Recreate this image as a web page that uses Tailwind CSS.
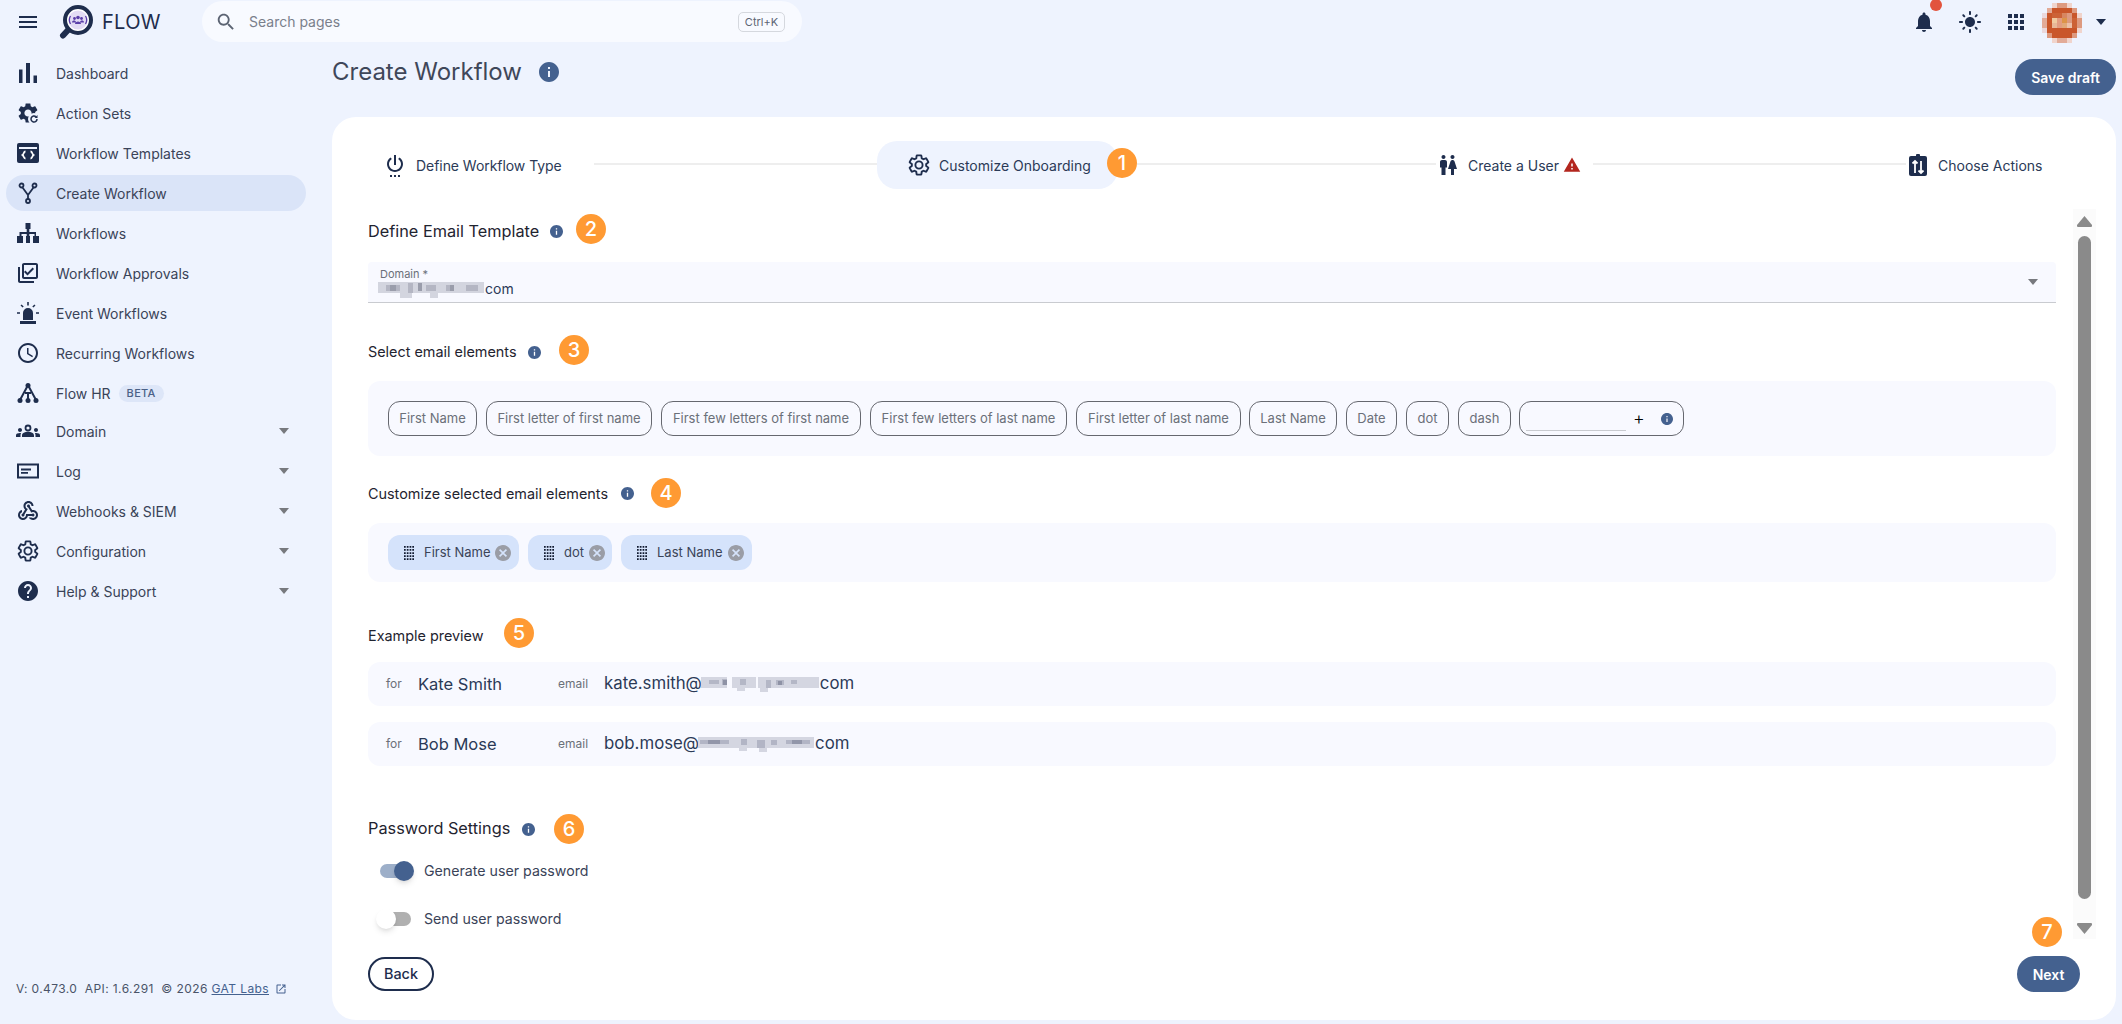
<!DOCTYPE html>
<html lang="en">

<head>
    <meta charset="UTF-8">
    <title>Create Workflow</title>
    <script src="https://cdn.jsdelivr.net/npm/@tailwindcss/browser@4"></script>
</head>

<body class="h-[1024px] w-[2122px] overflow-hidden bg-[#eef3fe] font-[family-name:Inter,sans-serif] text-[#1e2d4d]">

    <!-- top bar -->
    <header class="flex h-[44px] items-center">
        <svg class="ml-[16px] h-[24px] w-[24px] fill-[#1e2d4d]" viewBox="0 0 24 24"><path d="M3 18h18v-2H3v2zm0-5h18v-2H3v2zm0-7v2h18V6H3z"/></svg>
        <svg class="ml-[18px] h-[34px] w-[36px]" viewBox="0 0 36 34">
            <path d="M11 24 5 30.500" stroke="#1e2d4d" stroke-width="6" stroke-linecap="round"/>
            <circle cx="20" cy="15" r="13" fill="#fff" stroke="#1e2d4d" stroke-width="4"/>
            <circle cx="20" cy="15" r="9.500" fill="#e3dcf4"/>
            <circle cx="20" cy="12.500" r="1.800" fill="#5b3fa8"/><circle cx="16.500" cy="13.500" r="1.400" fill="#5b3fa8"/><circle cx="23.500" cy="13.500" r="1.400" fill="#5b3fa8"/>
            <path d="M17 19c0-3.500 6-3.500 6 0zM14 17.500c0-2.600 4-2.600 4 0zM22 17.500c0-2.600 4-2.600 4 0z" fill="#5b3fa8"/>
            <path d="M12.500 11c-1.500 2.500-1.500 5.500 0 8M27.500 11c1.500 2.500 1.500 5.500 0 8" fill="none" stroke="#5b3fa8" stroke-width="1.300"/>
        </svg>
        <span class="ml-[8px] w-[100px] text-[20px] leading-none tracking-[0.3px] text-[#1e2d4d]">FLOW</span>
        <div class="-mt-[1px] flex h-[41px] w-[600px] items-center rounded-full bg-[#f8faff] pl-[13px]">
            <svg class="h-[22px] w-[22px] fill-[#5c6473]" viewBox="0 0 24 24"><path d="M15.500 14h-.79l-.28-.27C15.410 12.590 16 11.110 16 9.500 16 5.910 13.090 3 9.500 3S3 5.910 3 9.500 5.910 16 9.500 16c1.610 0 3.090-.59 4.230-1.570l.27.28v.79l5 4.990L20.490 19l-4.990-5zm-6 0C7.010 14 5 11.990 5 9.500S7.010 5 9.500 5 14 7.010 14 9.500 11.990 14 9.500 14z"/></svg>
            <span class="ml-[12px] text-[14px] text-[#7a808c]">Search pages</span>
            <span class="ml-auto mr-[17px] w-[47px] rounded-[5px] border border-[#d5d8de] py-[2px] text-center text-[11px] leading-[14px] text-[#5c6473]">Ctrl+K</span>
        </div>
        <div class="ml-auto flex items-center">
            <div class="relative h-[24px] w-[24px]">
                <svg class="h-[24px] w-[24px] fill-[#1e2d4d]" viewBox="0 0 24 24"><path d="M12 22c1.100 0 2-.9 2-2h-4c0 1.100.89 2 2 2zm6-6v-5c0-3.070-1.640-5.640-4.500-6.320V4c0-.83-.67-1.500-1.500-1.500s-1.500.67-1.500 1.500v.68C7.630 5.360 6 7.920 6 11v5l-2 2v1h16v-1l-2-2z"/></svg>
                <span class="absolute -top-[11px] left-[18px] h-[12px] w-[12px] rounded-full bg-[#e2533d]"></span>
            </div>
            <svg class="ml-[22px] h-[24px] w-[24px] fill-[#1e2d4d]" viewBox="0 0 24 24"><path d="M12 7c-2.760 0-5 2.240-5 5s2.240 5 5 5 5-2.240 5-5-2.240-5-5-5zM2 13h2c.55 0 1-.45 1-1s-.45-1-1-1H2c-.55 0-1 .45-1 1s.45 1 1 1zm18 0h2c.55 0 1-.45 1-1s-.45-1-1-1h-2c-.55 0-1 .45-1 1s.45 1 1 1zM11 2v2c0 .55.45 1 1 1s1-.45 1-1V2c0-.55-.45-1-1-1s-1 .45-1 1zm0 18v2c0 .55.45 1 1 1s1-.45 1-1v-2c0-.55-.45-1-1-1s-1 .45-1 1zM5.990 4.580c-.39-.39-1.030-.39-1.410 0-.39.39-.39 1.030 0 1.410l1.060 1.060c.39.39 1.030.39 1.410 0s.39-1.030 0-1.410L5.990 4.580zm12.370 12.370c-.39-.39-1.030-.39-1.410 0-.39.39-.39 1.030 0 1.410l1.060 1.060c.39.39 1.030.39 1.410 0 .39-.39.39-1.030 0-1.410l-1.060-1.060zm1.060-10.960c.39-.39.39-1.030 0-1.410-.39-.39-1.030-.39-1.410 0l-1.060 1.060c-.39.39-.39 1.030 0 1.410s1.030.39 1.410 0l1.060-1.060zM7.050 18.360c.39-.39.39-1.030 0-1.410-.39-.39-1.030-.39-1.410 0l-1.060 1.060c-.39.39-.39 1.030 0 1.410s1.030.39 1.410 0l1.060-1.060z"/></svg>
            <svg class="ml-[22px] h-[24px] w-[24px] fill-[#1e2d4d]" viewBox="0 0 24 24"><path d="M4 8h4V4H4v4zm6 12h4v-4h-4v4zm-6 0h4v-4H4v4zm0-6h4v-4H4v4zm6 0h4v-4h-4v4zm6-10v4h4V4h-4zm-6 4h4V4h-4v4zm6 6h4v-4h-4v4zm0 6h4v-4h-4v4z"/></svg>
            <svg class="ml-[14px] mt-[2px] h-[40px] w-[40px]" viewBox="0 0 8 8" shape-rendering="crispEdges">
                <path fill="#f0d4cc" d="M2 0h1v1H2zM5 0h1v1H5zM7 2h1v1H7zM7 5h1v1H7zM2 7h1v1H2zM5 7h1v1H5z"/>
                <path fill="#dd9a80" d="M3 0h2v1H3zM6 1h1v1H6zM5 2h1v1H5zM7 3h1v2H7zM5 3h1v1H5zM1 6h1v1H1zM6 6h1v1H6z"/>
                <path fill="#ead8dc" d="M0 2h1v1H0zM0 5h1v1H0z"/>
                <path fill="#e2ab98" d="M0 3h1v2H0zM1 1h1v1H1zM3 7h2v1H3z"/>
                <path fill="#c9562a" d="M2 1h4v1H2zM1 2h1v4H1zM6 2h1v1H6zM2 5h5v1H2zM2 6h4v1H2z"/>
                <path fill="#cc6236" d="M2 2h2v1H2zM6 3h1v2H6z"/>
                <path fill="#d78660" d="M4 2h1v1H4z"/>
                <path fill="#f0cba0" d="M2 3h1v1H2z"/>
                <path fill="#e29c80" d="M3 3h1v2H3z"/>
                <path fill="#dd9448" d="M4 3h1v1H4z"/>
                <path fill="#e8b898" d="M2 4h1v1H2z"/>
                <path fill="#e2a878" d="M4 4h1v1H4z"/>
                <path fill="#ecc0a8" d="M5 4h1v1H5z"/>
            </svg>
            <svg class="ml-[14px] mr-[16px] h-[8px] w-[10px] fill-[#1e2d4d]" viewBox="0 0 10 8"><path d="M0 1h10L5 7z"/></svg>
        </div>
    </header>

    <div class="flex h-[980px]">

        <!-- sidebar -->
        <aside class="flex w-[332px] shrink-0 flex-col pl-[6px] pt-[11px]">
            <nav class="flex w-[300px] flex-col gap-[4px] text-[14px] text-[#3a4358]">
                <a class="flex h-[36px] items-center gap-[16px] pl-[10px]">
                    <svg class="h-[24px] w-[24px] fill-[#1e2d4d]" viewBox="0 0 24 24"><path d="M3 8.500h3.500V22H3zM10 2h4v20h-4zM17.500 14.500H21V22h-3.500z"/></svg>
                    Dashboard
                </a>
                <a class="flex h-[36px] items-center gap-[16px] pl-[10px]">
                    <svg class="h-[24px] w-[24px]" viewBox="0 0 24 24"><path fill="#1e2d4d" d="M19.140 12.940c.04-.3.06-.61.06-.94 0-.32-.02-.64-.07-.94l2.030-1.580c.18-.14.23-.41.12-.61l-1.920-3.320c-.12-.22-.37-.29-.59-.22l-2.390.96c-.5-.38-1.030-.7-1.620-.94l-.36-2.540c-.04-.24-.24-.41-.48-.41h-3.840c-.24 0-.43.17-.47.41l-.36 2.540c-.59.24-1.130.57-1.620.94l-2.390-.96c-.22-.08-.47 0-.59.22L2.740 8.870c-.12.21-.08.47.12.61l2.030 1.580c-.05.3-.09.63-.09.94s.02.64.07.94l-2.030 1.580c-.18.14-.23.41-.12.61l1.920 3.320c.12.22.37.29.59.22l2.390-.96c.5.38 1.030.7 1.620.94l.36 2.540c.05.24.24.41.48.41h3.840c.24 0 .44-.17.47-.41l.36-2.540c.59-.24 1.130-.56 1.620-.94l2.390.96c.22.08.47 0 .59-.22l1.920-3.320c.12-.22.07-.47-.12-.61l-2.010-1.580zM12 15.600c-1.980 0-3.600-1.620-3.600-3.600s1.620-3.600 3.600-3.600 3.600 1.620 3.600 3.600-1.620 3.600-3.600 3.600z"/><circle cx="18" cy="18" r="6" fill="#eef3fe"/><path d="M21 18a3 3 0 1 1-1-2.200" fill="none" stroke="#1e2d4d" stroke-width="1.500"/><path d="M21.500 14v3h-3z" fill="#1e2d4d"/></svg>
                    Action Sets
                </a>
                <a class="flex h-[36px] items-center gap-[16px] pl-[10px]">
                    <svg class="h-[24px] w-[24px]" viewBox="0 0 24 24"><rect x="1" y="2" width="22" height="20" rx="2" fill="#1e2d4d"/><rect x="3" y="6" width="18" height="2" fill="#eef3fe"/><path d="M9.500 10.500c-2 0-1.500 2.500-3 3.500 1.500 1 1 3.500 3 3.500M14.500 10.500c2 0 1.500 2.500 3 3.500-1.500 1-1 3.500-3 3.500" fill="none" stroke="#fff" stroke-width="1.800"/></svg>
                    Workflow Templates
                </a>
                <a class="flex h-[36px] items-center gap-[16px] rounded-full bg-[#dae4f8] pl-[10px]">
                    <svg class="h-[24px] w-[24px]" viewBox="0 0 24 24" fill="none" stroke="#1e2d4d" stroke-width="1.800"><circle cx="5.500" cy="4.500" r="2"/><circle cx="18.500" cy="4.500" r="2"/><circle cx="12" cy="20" r="2"/><path d="M6.500 6.500 12 14l5.500-7.500M12 14v4"/></svg>
                    Create Workflow
                </a>
                <a class="flex h-[36px] items-center gap-[16px] pl-[10px]">
                    <svg class="h-[24px] w-[24px] fill-[#1e2d4d]" viewBox="0 0 24 24"><path d="M9.500 2h5v6h-1.200v3H20v4h1.500 1.500v7h-6v-7h1.500v-2h-5.200v2H14v7h-4v-7h.7v-2H5.500v2H7v7H1v-7h2.500v-4h7.200V8H9.500z"/></svg>
                    Workflows
                </a>
                <a class="flex h-[36px] items-center gap-[16px] pl-[10px]">
                    <svg class="h-[24px] w-[24px] fill-[#1e2d4d]" viewBox="0 0 24 24"><path d="M20 4v12H8V4h12m0-2H8c-1.100 0-2 .9-2 2v12c0 1.100.9 2 2 2h12c1.100 0 2-.9 2-2V4c0-1.100-.9-2-2-2zm-8.500 12.500L8 11l1.410-1.410 2.090 2.080 5.090-5.090L18 8l-6.500 6.500zM4 6H2v14c0 1.100.9 2 2 2h14v-2H4V6z"/></svg>
                    Workflow Approvals
                </a>
                <a class="flex h-[36px] items-center gap-[16px] pl-[10px]">
                    <svg class="h-[24px] w-[24px] fill-[#1e2d4d]" viewBox="0 0 24 24"><path d="M7 19v-7a5 5 0 0 1 10 0v7zM4 20h16v3H4zM11.200 1h1.600v3.500h-1.600zM1 11.200h3v1.600H1zM20 11.200h3v1.600h-3zM4.500 4.500l1.100-1.100 2.100 2.100-1.100 1.100zM18.400 3.400l1.100 1.100-2.100 2.100-1.100-1.100z"/></svg>
                    Event Workflows
                </a>
                <a class="flex h-[36px] items-center gap-[16px] pl-[10px]">
                    <svg class="h-[24px] w-[24px] fill-[#1e2d4d]" viewBox="0 0 24 24"><path d="M11.990 2C6.470 2 2 6.480 2 12s4.470 10 9.990 10C17.520 22 22 17.520 22 12S17.520 2 11.990 2zM12 20c-4.420 0-8-3.580-8-8s3.580-8 8-8 8 3.580 8 8-3.580 8-8 8zm.5-13H11v6l5.250 3.150.75-1.230-4.500-2.670z"/></svg>
                    Recurring Workflows
                </a>
                <a class="flex h-[36px] items-center gap-[16px] pl-[10px]">
                    <svg class="h-[24px] w-[24px]" viewBox="0 0 24 24"><g fill="#1e2d4d"><circle cx="12" cy="4.500" r="2.500"/><circle cx="4" cy="19.500" r="2.500"/><circle cx="12" cy="19.500" r="2.500"/><circle cx="20" cy="19.500" r="2.500"/></g><path d="M11 6 4 19M13 6l7 13M12 12l-.01 7M9 12l3 0 3 0" fill="none" stroke="#1e2d4d" stroke-width="2"/></svg>
                    <span>Flow HR</span>
                    <span class="-ml-[8px] rounded-full bg-[#dde6f8] px-[8px] text-[11px] font-medium leading-[17px] tracking-[0.3px] text-[#4a6187]">BETA</span>
                </a>
                <a class="-mt-[2px] flex h-[36px] items-center gap-[16px] pl-[10px]">
                    <svg class="h-[24px] w-[24px]" viewBox="0 0 24 24"><circle cx="12" cy="9" r="2.500" fill="none" stroke="#1e2d4d" stroke-width="1.800"/><path fill="#1e2d4d" d="M4 13c1.100 0 2-.9 2-2s-.9-2-2-2-2 .9-2 2 .9 2 2 2zm1.130 1.100c-.37-.06-.74-.1-1.130-.1-.99 0-1.930.21-2.780.58C.48 14.900 0 15.620 0 16.430V18h4.500v-1.610c0-.83.23-1.610.63-2.290zM20 13c1.100 0 2-.9 2-2s-.9-2-2-2-2 .9-2 2 .9 2 2 2zm4 3.430c0-.81-.48-1.530-1.220-1.850-.85-.37-1.790-.58-2.780-.58-.39 0-.76.04-1.130.1.4.68.63 1.460.63 2.290V18H24v-1.570zM12 12.750c1.630 0 3.070.39 4.240.9 1.080.48 1.760 1.560 1.760 2.730V18H6v-1.610c0-1.180.68-2.260 1.760-2.730 1.170-.52 2.610-.91 4.240-.91z"/></svg>
                    Domain
                    <svg class="ml-auto mr-[17px] h-[6px] w-[10px] fill-[#77797e]" viewBox="0 0 10 6"><path d="M0 0h10L5 6z"/></svg>
                </a>
                <a class="flex h-[36px] items-center gap-[16px] pl-[10px]">
                    <svg class="h-[24px] w-[24px]" viewBox="0 0 24 24"><rect x="2" y="5.500" width="20" height="13" fill="none" stroke="#1e2d4d" stroke-width="2"/><path d="M5 9.500h10v2H5zM5 13h7v1.800H5z" fill="#1e2d4d"/></svg>
                    Log
                    <svg class="ml-auto mr-[17px] h-[6px] w-[10px] fill-[#77797e]" viewBox="0 0 10 6"><path d="M0 0h10L5 6z"/></svg>
                </a>
                <a class="flex h-[36px] items-center gap-[16px] pl-[10px]">
                    <svg class="h-[24px] w-[24px] fill-[#1e2d4d]" viewBox="0 0 24 24"><path d="M10 15h5.880c.27-.31.67-.5 1.120-.5.83 0 1.500.67 1.500 1.500s-.67 1.500-1.500 1.500c-.44 0-.84-.19-1.120-.5H11.900c-.46 2.280-2.480 4-4.900 4-2.760 0-5-2.240-5-5 0-2.420 1.720-4.440 4-4.900v2.070c-1.160.41-2 1.530-2 2.830 0 1.650 1.350 3 3 3s3-1.350 3-3v-1zm2.500-11c1.650 0 3 1.350 3 3h2c0-2.760-2.240-5-5-5s-5 2.240-5 5c0 1.430.6 2.710 1.550 3.620l-2.350 3.900c-.68.14-1.200.75-1.200 1.480 0 .83.67 1.500 1.500 1.500s1.500-.67 1.500-1.500c0-.16-.02-.31-.07-.45l3.380-5.630C10.490 9.610 9.500 8.420 9.500 7c0-1.650 1.350-3 3-3zm4.500 9c-.64 0-1.230.2-1.720.54l-3.050-5.070C11.530 8.350 11 7.740 11 7c0-.83.67-1.500 1.500-1.500S14 6.170 14 7c0 .15-.02.29-.06.43l2.190 3.650c.28-.05.57-.08.87-.08 2.760 0 5 2.240 5 5s-2.240 5-5 5c-1.850 0-3.470-1.010-4.330-2.500h2.670c.48.32 1.050.5 1.660.5 1.650 0 3-1.350 3-3s-1.350-3-3-3z"/></svg>
                    Webhooks &amp; SIEM
                    <svg class="ml-auto mr-[17px] h-[6px] w-[10px] fill-[#77797e]" viewBox="0 0 10 6"><path d="M0 0h10L5 6z"/></svg>
                </a>
                <a class="flex h-[36px] items-center gap-[16px] pl-[10px]">
                    <svg class="h-[24px] w-[24px]" viewBox="0 0 24 24"><path fill="none" stroke="#1e2d4d" stroke-width="1.900" d="M19.140 12.940c.04-.3.06-.61.06-.94 0-.32-.02-.64-.07-.94l2.030-1.580c.18-.14.23-.41.12-.61l-1.920-3.320c-.12-.22-.37-.29-.59-.22l-2.390.96c-.5-.38-1.030-.7-1.620-.94l-.36-2.540c-.04-.24-.24-.41-.48-.41h-3.840c-.24 0-.43.17-.47.41l-.36 2.540c-.59.24-1.130.57-1.620.94l-2.390-.96c-.22-.08-.47 0-.59.22L2.740 8.870c-.12.21-.08.47.12.61l2.030 1.580c-.05.3-.09.63-.09.94s.02.64.07.94l-2.030 1.580c-.18.14-.23.41-.12.61l1.920 3.320c.12.22.37.29.59.22l2.390-.96c.5.38 1.030.7 1.620.94l.36 2.540c.05.24.24.41.48.41h3.840c.24 0 .44-.17.47-.41l.36-2.540c.59-.24 1.130-.56 1.620-.94l2.390.96c.22.08.47 0 .59-.22l1.920-3.320c.12-.22.07-.47-.12-.61l-2.010-1.580zM12 15.600c-1.980 0-3.600-1.620-3.600-3.600s1.620-3.600 3.600-3.600 3.600 1.620 3.600 3.600-1.620 3.600-3.600 3.600z"/></svg>
                    Configuration
                    <svg class="ml-auto mr-[17px] h-[6px] w-[10px] fill-[#77797e]" viewBox="0 0 10 6"><path d="M0 0h10L5 6z"/></svg>
                </a>
                <a class="flex h-[36px] items-center gap-[16px] pl-[10px]">
                    <svg class="h-[24px] w-[24px] fill-[#1e2d4d]" viewBox="0 0 24 24"><path d="M12 2C6.480 2 2 6.480 2 12s4.480 10 10 10 10-4.480 10-10S17.520 2 12 2zm1 17h-2v-2h2v2zm2.070-7.750l-.9.92C13.450 12.900 13 13.500 13 15h-2v-.5c0-1.100.45-2.100 1.170-2.830l1.240-1.260c.37-.36.59-.86.59-1.410 0-1.100-.9-2-2-2s-2 .9-2 2H8c0-2.210 1.790-4 4-4s4 1.790 4 4c0 .88-.36 1.680-.93 2.250z"/></svg>
                    Help &amp; Support
                    <svg class="ml-auto mr-[17px] h-[6px] w-[10px] fill-[#77797e]" viewBox="0 0 10 6"><path d="M0 0h10L5 6z"/></svg>
                </a>
            </nav>
            <div class="mb-[27px] mt-auto flex items-center pl-[10px] text-[12px] leading-[16px] tracking-[0.4px] text-[#4a5368]">
                <span class="whitespace-pre">V: 0.473.0  API: 1.6.291  © 2026 </span><a class="text-[#44618f] underline">GAT Labs</a>
                <svg class="ml-[6px] h-[12px] w-[12px] fill-[#44618f]" viewBox="0 0 24 24"><path d="M19 19H5V5h7V3H5c-1.110 0-2 .9-2 2v14c0 1.100.89 2 2 2h14c1.100 0 2-.9 2-2v-7h-2v7zM14 3v2h3.590l-9.830 9.830 1.410 1.410L19 6.410V10h2V3h-7z"/></svg>
            </div>
        </aside>

        <main class="flex w-[1784px] flex-col">
            <div class="flex h-[73px] items-start">
                <h1 class="mt-[12px] text-[24px] font-normal leading-[32px] text-[#3f4759]">Create Workflow</h1>
                <svg class="ml-[17px] mt-[18px] h-[20px] w-[20px] fill-[#44618f]" viewBox="2 2 20 20"><path d="M12 2C6.480 2 2 6.480 2 12s4.480 10 10 10 10-4.480 10-10S17.520 2 12 2zm1 15h-2v-6h2v6zm0-8h-2V7h2v2z"/></svg>
                <button class="ml-auto mt-[15px] h-[36px] w-[101px] rounded-full bg-[#44618f] text-[14px] font-semibold text-white">Save draft</button>
            </div>

            <section class="flex h-[903px] flex-col rounded-[24px] bg-white pl-[36px] pr-[20px]">

                <!-- stepper -->
                <div class="mt-[24px] flex h-[48px] items-center text-[14px] text-[#2b3a57]">
                    <svg class="ml-[15px] h-[24px] w-[24px] fill-[#1e2d4d]" viewBox="0 0 24 24"><path d="M7 24h2v-2H7v2zm4 0h2v-2h-2v2zm2-22h-2v10h2V2zm3.560 2.440l-1.450 1.450C16.840 6.940 18 8.830 18 11c0 3.310-2.690 6-6 6s-6-2.690-6-6c0-2.170 1.160-4.060 2.880-5.120L7.440 4.440C5.360 5.880 4 8.280 4 11c0 4.420 3.580 8 8 8s8-3.580 8-8c0-2.720-1.360-5.120-3.440-6.560zM15 24h2v-2h-2v2z"/></svg>
                    <span class="ml-[9px] w-[145px] whitespace-nowrap tracking-[-0.05px]">Define Workflow Type</span>
                    <span class="-mt-[2px] ml-[33px] h-[2px] w-[283px] bg-[#eeeeee]"></span>
                    <div class="relative flex h-[48px] w-[241px] items-center rounded-[20px] bg-[#eef3fe] pl-[30px]">
                        <svg class="h-[24px] w-[24px]" viewBox="0 0 24 24"><path fill="none" stroke="#1e2d4d" stroke-width="1.900" d="M19.140 12.940c.04-.3.06-.61.06-.94 0-.32-.02-.64-.07-.94l2.030-1.580c.18-.14.23-.41.12-.61l-1.920-3.320c-.12-.22-.37-.29-.59-.22l-2.390.96c-.5-.38-1.030-.7-1.620-.94l-.36-2.540c-.04-.24-.24-.41-.48-.41h-3.840c-.24 0-.43.17-.47.41l-.36 2.540c-.59.24-1.130.57-1.620.94l-2.390-.96c-.22-.08-.47 0-.59.22L2.740 8.870c-.12.21-.08.47.12.61l2.030 1.580c-.05.3-.09.63-.09.94s.02.64.07.94l-2.030 1.580c-.18.14-.23.41-.12.61l1.920 3.320c.12.22.37.29.59.22l2.390-.96c.5.38 1.030.7 1.620.94l.36 2.540c.05.24.24.41.48.41h3.840c.24 0 .44-.17.47-.41l.36-2.540c.59-.24 1.130-.56 1.620-.94l2.390.96c.22.08.47 0 .59-.22l1.920-3.320c.12-.22.07-.47-.12-.61l-2.010-1.580zM12 15.600c-1.980 0-3.600-1.620-3.600-3.600s1.620-3.600 3.600-3.600 3.600 1.620 3.600 3.600-1.620 3.600-3.600 3.600z"/></svg>
                        <span class="ml-[8px] whitespace-nowrap">Customize Onboarding</span>
                        <span class="absolute left-[230px] top-[7px] flex h-[30px] w-[30px] items-center justify-center rounded-full bg-[#ff9a33] text-[20px] font-medium text-white">1</span>
                    </div>
                    <span class="-mt-[2px] ml-[19px] h-[2px] w-[299px] bg-[#eeeeee]"></span>
                    <svg class="h-[24px] w-[24px] fill-[#1e2d4d]" viewBox="0 0 24 24"><path d="M5.500 22v-7.500H4V9c0-1.100.9-2 2-2h3c1.100 0 2 .9 2 2v5.500H9.500V22h-4zM18 22v-6h3l-2.540-7.630C18.180 7.550 17.420 7 16.560 7h-.12c-.86 0-1.630.55-1.900 1.370L12 16h3v6h3zM7.500 6c1.110 0 2-.89 2-2s-.89-2-2-2-2 .89-2 2 .89 2 2 2zm9 0c1.110 0 2-.89 2-2s-.89-2-2-2-2 .89-2 2 .89 2 2 2z"/></svg>
                    <span class="ml-[8px] w-[92px] whitespace-nowrap">Create a User</span>
                    <svg class="ml-[3px] h-[18px] w-[18px] fill-[#b3261e]" viewBox="0 0 24 24"><path d="M1 21h22L12 2 1 21zm12-3h-2v-2h2v2zm0-4h-2v-4h2v4z"/></svg>
                    <span class="-mt-[2px] ml-[12px] h-[2px] w-[313px] bg-[#eeeeee]"></span>
                    <svg class="h-[24px] w-[24px]" viewBox="0 0 24 24"><rect x="3" y="3" width="18" height="20" rx="2" fill="#1e2d4d"/><rect x="10" y="1" width="4" height="4" rx="1" fill="#1e2d4d"/><path d="M9 20V8M6.500 10.500 9 8l2.500 2.500M15 8v12M12.500 17.500 15 20l2.500-2.500" fill="none" stroke="#fff" stroke-width="1.800"/></svg>
                    <span class="ml-[8px] whitespace-nowrap">Choose Actions</span>
                </div>

                <div class="mt-[20px] flex h-[730px] overflow-hidden">
                    <!-- form -->
                    <div class="w-[1688px] shrink-0">
                        <div class="mt-[5px] flex h-[30px] items-center">
                            <h2 class="w-[171px] whitespace-nowrap pt-[4px] text-[16.300px] leading-[24px] text-[#1f2430]">Define Email Template</h2>
                            <svg class="ml-[11px] mt-[4px] h-[13px] w-[13px] fill-[#44618f]" viewBox="2 2 20 20"><path d="M12 2C6.480 2 2 6.480 2 12s4.480 10 10 10 10-4.480 10-10S17.520 2 12 2zm1 15h-2v-6h2v6zm0-8h-2V7h2v2z"/></svg>
                            <span class="ml-[13px] flex h-[30px] w-[30px] items-center justify-center rounded-full bg-[#ff9a33] text-[20px] font-medium text-white">2</span>
                        </div>
                        <div class="mt-[18px] flex h-[41px] items-center rounded-t-[4px] border-b border-[#c9cbd0] bg-[#f8f9ff] pl-[12px] pr-[18px]">
                            <div class="flex-1">
                                <div class="text-[11px] leading-[14px] text-[#6b7079]">Domain *</div>
                                <div class="-ml-[2px] -mt-[1px] flex h-[18px] items-center text-[14px] text-[#2b3a57]">
                                    <svg class="h-[18px] w-[106px] blur-[0.7px]" viewBox="0 0 106 18" shape-rendering="crispEdges">
                                        <path fill="#d3d5df" d="M0 2h106v11H0zM22 13h12v5H22zM52 13h8v5h-8z"/>
                                        <path fill="#b4b6c3" d="M8 5h14v6H8zM30 3h5v10h-5zM48 5h10v6H48zM68 5h8v6h-8zM88 5h12v6H88z"/>
                                        <path fill="#9a9dab" d="M12 5h6v6h-6zM72 5h4v6h-4zM40 3h4v8h-4z"/>
                                    </svg>
                                    <span class="ml-[1px]">com</span>
                                </div>
                            </div>
                            <svg class="h-[6px] w-[10px] fill-[#77797e]" viewBox="0 0 10 6"><path d="M0 0h10L5 6z"/></svg>
                        </div>

                        <div class="mt-[32px] flex h-[30px] items-center">
                            <h2 class="w-[149px] whitespace-nowrap pt-[4px] text-[14.400px] leading-[20px] text-[#1f2430]">Select email elements</h2>
                            <svg class="ml-[11px] mt-[4px] h-[13px] w-[13px] fill-[#44618f]" viewBox="2 2 20 20"><path d="M12 2C6.480 2 2 6.480 2 12s4.480 10 10 10 10-4.480 10-10S17.520 2 12 2zm1 15h-2v-6h2v6zm0-8h-2V7h2v2z"/></svg>
                            <span class="ml-[18px] flex h-[30px] w-[30px] items-center justify-center rounded-full bg-[#ff9a33] text-[20px] font-medium text-white">3</span>
                        </div>
                        <div class="mt-[16px] flex h-[75px] gap-[9px] rounded-[12px] bg-[#f8f9ff] px-[20px] pt-[20px] text-[13px] text-[#6b7079]">
                            <span class="flex h-[35px] w-[89px] items-center justify-center rounded-[12px] border border-[#66686f] whitespace-nowrap">First Name</span>
                            <span class="flex h-[35px] w-[166px] items-center justify-center rounded-[12px] border border-[#66686f] whitespace-nowrap">First letter of first name</span>
                            <span class="flex h-[35px] w-[200px] items-center justify-center rounded-[12px] border border-[#66686f] whitespace-nowrap">First few letters of first name</span>
                            <span class="flex h-[35px] w-[197px] items-center justify-center rounded-[12px] border border-[#66686f] whitespace-nowrap">First few letters of last name</span>
                            <span class="flex h-[35px] w-[165px] items-center justify-center rounded-[12px] border border-[#66686f] whitespace-nowrap">First letter of last name</span>
                            <span class="-ml-[1px] flex h-[35px] w-[88px] items-center justify-center rounded-[12px] border border-[#66686f] whitespace-nowrap">Last Name</span>
                            <span class="flex h-[35px] w-[51px] items-center justify-center rounded-[12px] border border-[#66686f] whitespace-nowrap">Date</span>
                            <span class="flex h-[35px] w-[43px] items-center justify-center rounded-[12px] border border-[#66686f] whitespace-nowrap">dot</span>
                            <span class="flex h-[35px] w-[53px] items-center justify-center rounded-[12px] border border-[#66686f] whitespace-nowrap">dash</span>
                            <span class="-ml-[1px] flex h-[35px] w-[165px] items-center rounded-[12px] border border-[#66686f] pl-[6px]">
                                <span class="mt-[23px] h-[1px] w-[100px] bg-[#c9cbd0]"></span>
                                <span class="ml-[7px] text-[18px] font-light leading-none text-black">+</span>
                                <svg class="ml-[16px] h-[12px] w-[12px] fill-[#44618f]" viewBox="2 2 20 20"><path d="M12 2C6.480 2 2 6.480 2 12s4.480 10 10 10 10-4.480 10-10S17.520 2 12 2zm1 15h-2v-6h2v6zm0-8h-2V7h2v2z"/></svg>
                            </span>
                        </div>

                        <div class="mt-[22px] flex h-[30px] items-center">
                            <h2 class="w-[243px] whitespace-nowrap pt-[2px] text-[14.400px] leading-[20px] text-[#1f2430]">Customize selected email elements</h2>
                            <svg class="ml-[10px] mt-[1px] h-[13px] w-[13px] fill-[#44618f]" viewBox="2 2 20 20"><path d="M12 2C6.480 2 2 6.480 2 12s4.480 10 10 10 10-4.480 10-10S17.520 2 12 2zm1 15h-2v-6h2v6zm0-8h-2V7h2v2z"/></svg>
                            <span class="ml-[17px] flex h-[30px] w-[30px] items-center justify-center rounded-full bg-[#ff9a33] text-[20px] font-medium text-white">4</span>
                        </div>
                        <div class="mt-[15px] flex h-[59px] gap-[9px] rounded-[12px] bg-[#f8f9ff] px-[20px] pt-[12px] text-[13px] text-[#3a4358]">
                            <span class="flex h-[35px] w-[131px] items-center rounded-[12px] bg-[#d5e3fb] pl-[16px]">
                                <svg class="h-[14px] w-[10px] fill-[#111a30]" viewBox="0 0 10 14"><path d="M0 0h1.700v1.700H0zM2.800 0h1.700v1.700H2.800zM5.600 0h1.700v1.700H5.600zM8.300 0H10v1.700H8.300zM0 3.100h1.700v1.700H0zM2.800 3.100h1.700v1.700H2.800zM5.600 3.100h1.700v1.700H5.600zM8.300 3.100H10v1.700H8.300zM0 6.200h1.700v1.700H0zM2.800 6.200h1.700v1.700H2.800zM5.600 6.200h1.700v1.700H5.600zM8.300 6.200H10v1.700H8.300zM0 9.300h1.700v1.700H0zM2.800 9.300h1.700v1.700H2.800zM5.600 9.300h1.700v1.700H5.600zM8.300 9.300H10v1.700H8.300zM0 12.300h1.700V14H0zM2.800 12.300h1.700V14H2.800zM5.600 12.300h1.700V14H5.600zM8.300 12.300H10V14H8.300z"/></svg>
                                <span class="ml-[10px] whitespace-nowrap">First Name</span>
                                <svg class="ml-[4px] h-[16px] w-[16px] fill-[#9a9da6]" viewBox="2 2 20 20"><path d="M12 2C6.470 2 2 6.470 2 12s4.470 10 10 10 10-4.470 10-10S17.530 2 12 2zm5 13.590L15.590 17 12 13.410 8.410 17 7 15.590 10.590 12 7 8.410 8.410 7 12 10.590 15.590 7 17 8.410 13.410 12 17 15.590z"/></svg>
                            </span>
                            <span class="flex h-[35px] w-[84px] items-center rounded-[12px] bg-[#d5e3fb] pl-[16px]">
                                <svg class="h-[14px] w-[10px] fill-[#111a30]" viewBox="0 0 10 14"><path d="M0 0h1.700v1.700H0zM2.800 0h1.700v1.700H2.800zM5.600 0h1.700v1.700H5.600zM8.300 0H10v1.700H8.300zM0 3.100h1.700v1.700H0zM2.800 3.100h1.700v1.700H2.800zM5.600 3.100h1.700v1.700H5.600zM8.300 3.100H10v1.700H8.300zM0 6.200h1.700v1.700H0zM2.800 6.200h1.700v1.700H2.800zM5.600 6.200h1.700v1.700H5.600zM8.300 6.200H10v1.700H8.300zM0 9.300h1.700v1.700H0zM2.800 9.300h1.700v1.700H2.800zM5.600 9.300h1.700v1.700H5.600zM8.300 9.300H10v1.700H8.300zM0 12.300h1.700V14H0zM2.800 12.300h1.700V14H2.800zM5.600 12.300h1.700V14H5.600zM8.300 12.300H10V14H8.300z"/></svg>
                                <span class="ml-[10px]">dot</span>
                                <svg class="ml-[5px] h-[16px] w-[16px] fill-[#9a9da6]" viewBox="2 2 20 20"><path d="M12 2C6.470 2 2 6.470 2 12s4.470 10 10 10 10-4.470 10-10S17.530 2 12 2zm5 13.590L15.590 17 12 13.410 8.410 17 7 15.590 10.590 12 7 8.410 8.410 7 12 10.590 15.590 7 17 8.410 13.410 12 17 15.590z"/></svg>
                            </span>
                            <span class="flex h-[35px] w-[131px] items-center rounded-[12px] bg-[#d5e3fb] pl-[16px]">
                                <svg class="h-[14px] w-[10px] fill-[#111a30]" viewBox="0 0 10 14"><path d="M0 0h1.700v1.700H0zM2.800 0h1.700v1.700H2.800zM5.600 0h1.700v1.700H5.600zM8.300 0H10v1.700H8.300zM0 3.100h1.700v1.700H0zM2.800 3.100h1.700v1.700H2.800zM5.600 3.100h1.700v1.700H5.600zM8.300 3.100H10v1.700H8.300zM0 6.200h1.700v1.700H0zM2.800 6.200h1.700v1.700H2.800zM5.600 6.200h1.700v1.700H5.600zM8.300 6.200H10v1.700H8.300zM0 9.300h1.700v1.700H0zM2.800 9.300h1.700v1.700H2.800zM5.600 9.300h1.700v1.700H5.600zM8.300 9.300H10v1.700H8.300zM0 12.300h1.700V14H0zM2.800 12.300h1.700V14H2.800zM5.600 12.300h1.700V14H5.600zM8.300 12.300H10V14H8.300z"/></svg>
                                <span class="ml-[10px] whitespace-nowrap">Last Name</span>
                                <svg class="ml-[6px] h-[16px] w-[16px] fill-[#9a9da6]" viewBox="2 2 20 20"><path d="M12 2C6.470 2 2 6.470 2 12s4.470 10 10 10 10-4.470 10-10S17.530 2 12 2zm5 13.590L15.590 17 12 13.410 8.410 17 7 15.590 10.590 12 7 8.410 8.410 7 12 10.590 15.590 7 17 8.410 13.410 12 17 15.590z"/></svg>
                            </span>
                        </div>

                        <div class="mt-[36px] flex h-[30px] items-center">
                            <h2 class="w-[115px] whitespace-nowrap pt-[6px] text-[14.400px] leading-[20px] text-[#1f2430]">Example preview</h2>
                            <span class="ml-[21px] flex h-[30px] w-[30px] items-center justify-center rounded-full bg-[#ff9a33] text-[20px] font-medium text-white">5</span>
                        </div>
                        <div class="mt-[14px] flex h-[44px] items-center rounded-[12px] bg-[#f8f9ff] pl-[18px] text-[#2b3a57]">
                            <span class="w-[32px] text-[12px] text-[#6b7079]">for</span>
                            <span class="w-[140px] text-[16.500px]">Kate Smith</span>
                            <span class="w-[46px] text-[12px] text-[#6b7079]">email</span>
                            <span class="text-[16.800px]">kate.smith@</span>
                            <svg class="-ml-[1px] h-[15px] w-[118px] blur-[0.6px]" viewBox="0 0 120 15" preserveAspectRatio="none" shape-rendering="crispEdges">
                                <path fill="#d4d6e1" d="M0 0h26v11H0zM32 0h24v11H32zM58 0h62v11H58zM60 11h8v4h-8zM37 11h8v3h-8z"/>
                                <path fill="#b4b7c6" d="M8 3h10v4H8zM21 2h5v6h-5zM40 2h6v6h-6zM66 3h5v8h-5zM76 3h8v5h-8zM92 3h6v4h-6z"/>
                                <path fill="#8e92a5" d="M22 3h4v5h-4zM78 4h4v4h-4z"/>
                            </svg>
                            <span class="ml-[1px] text-[16.800px]">com</span>
                        </div>
                        <div class="mt-[16px] flex h-[44px] items-center rounded-[12px] bg-[#f8f9ff] pl-[18px] text-[#2b3a57]">
                            <span class="w-[32px] text-[12px] text-[#6b7079]">for</span>
                            <span class="w-[140px] text-[16.500px]">Bob Mose</span>
                            <span class="w-[46px] text-[12px] text-[#6b7079]">email</span>
                            <span class="text-[16.800px]">bob.mose@</span>
                            <svg class="-ml-[1px] h-[15px] w-[116px] blur-[0.6px]" viewBox="0 0 118 15" preserveAspectRatio="none" shape-rendering="crispEdges">
                                <path fill="#d4d6e1" d="M0 0h118v11H0zM62 11h8v4h-8zM42 11h8v3h-8z"/>
                                <path fill="#b2b5c5" d="M2 3h30v4H2zM44 2h6v6h-6zM60 3h8v8h-8zM74 3h6v5h-6zM90 3h24v4H90z"/>
                                <path fill="#9296a9" d="M10 3h12v4H10zM96 3h10v4H96z"/>
                            </svg>
                            <span class="ml-[1px] text-[16.800px]">com</span>
                        </div>

                        <div class="mt-[48px] flex h-[30px] items-center">
                            <h2 class="w-[142px] whitespace-nowrap pb-[2px] text-[16.300px] leading-[24px] text-[#1f2430]">Password Settings</h2>
                            <svg class="ml-[12px] h-[13px] w-[13px] fill-[#44618f]" viewBox="2 2 20 20"><path d="M12 2C6.480 2 2 6.480 2 12s4.480 10 10 10 10-4.480 10-10S17.520 2 12 2zm1 15h-2v-6h2v6zm0-8h-2V7h2v2z"/></svg>
                            <span class="ml-[19px] flex h-[30px] w-[30px] items-center justify-center rounded-full bg-[#ff9a33] text-[20px] font-medium text-white">6</span>
                        </div>
                        <label class="ml-[12px] mt-[15px] flex h-[24px] items-center text-[14.200px] text-[#3a4358]">
                            <span class="relative h-[14px] w-[30px] rounded-full bg-[#9dafc9]">
                                <span class="absolute -top-[3px] left-[14px] h-[20px] w-[20px] rounded-full bg-[#44618f] shadow-md"></span>
                            </span>
                            <span class="ml-[14px]">Generate user password</span>
                        </label>
                        <label class="ml-[10px] mt-[24px] flex h-[24px] items-center text-[14.200px] text-[#3a4358]">
                            <span class="relative h-[14px] w-[33px] rounded-full bg-[#b0b0b0]">
                                <span class="absolute -top-[3px] -left-[2px] h-[20px] w-[20px] rounded-full bg-white shadow-md"></span>
                            </span>
                            <span class="ml-[13px]">Send user password</span>
                        </label>
                    </div>

                    <!-- scrollbar -->
                    <div class="ml-[17px] flex h-[730px] w-[23px] flex-col items-center bg-[#fbfbfb] pt-[7px]">
                        <svg class="h-[11px] w-[15px] fill-[#8a8a8a]" viewBox="0 0 15 11"><path d="M7.500 0 15 9c.3.6 0 2-1 2H1C0 11-.3 9.600 0 9z"/></svg>
                        <span class="mt-[9px] h-[663px] w-[13px] rounded-full bg-[#8a8a8a]"></span>
                        <svg class="mt-[24px] h-[11px] w-[15px] fill-[#8a8a8a]" viewBox="0 0 15 11"><path d="M7.500 11 15 2c.3-.6 0-2-1-2H1C0 0-.3 1.400 0 2z"/></svg>
                    </div>
                </div>

                <div class="relative mt-[17px] flex h-[36px] items-center justify-between pr-[16px]">
                    <button class="h-[34px] w-[66px] rounded-full border-2 border-[#1e2d4d] text-[14.400px] font-medium text-[#1e2d4d]">Back</button>
                    <span class="absolute -top-[39px] right-[34px] flex h-[30px] w-[30px] items-center justify-center rounded-full bg-[#ff9a33] text-[20px] font-medium text-white">7</span>
                    <button class="h-[36px] w-[63px] rounded-full bg-[#44618f] text-[14px] font-semibold text-white">Next</button>
                </div>
            </section>
        </main>
    </div>
</body>

</html>
